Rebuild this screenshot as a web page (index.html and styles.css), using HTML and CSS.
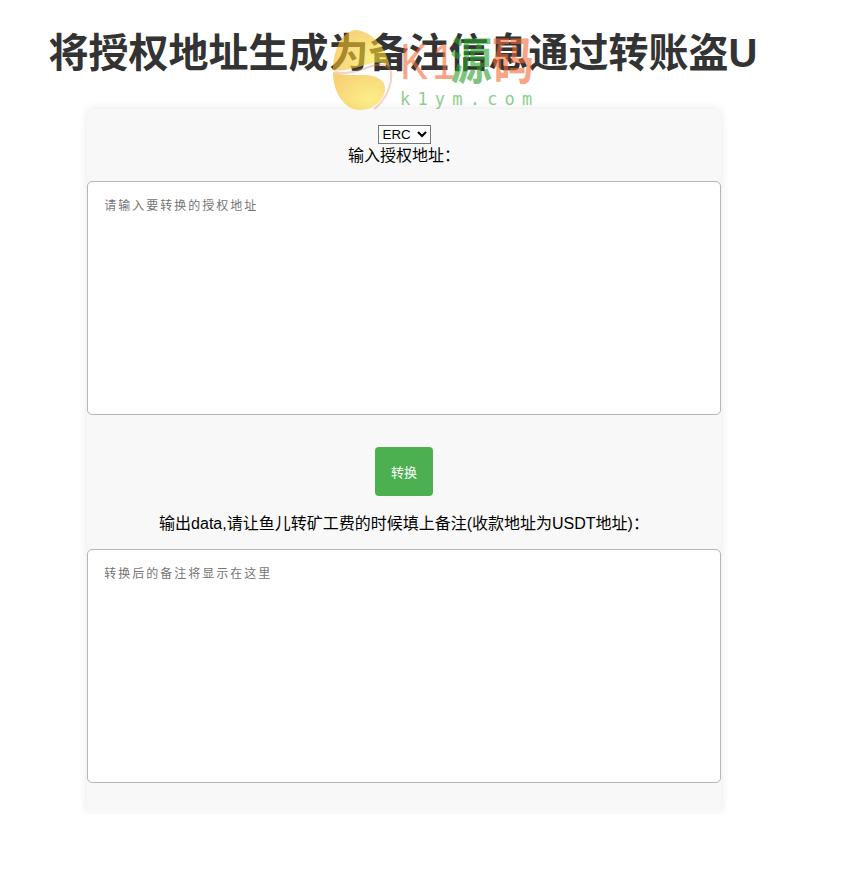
FILE: index.html
```html
<!DOCTYPE html>
<html lang="zh-CN">
<head>
<meta charset="utf-8">
<title>将授权地址生成为备注信息通过转账盗U</title>
<link rel="stylesheet" href="styles.css">
</head>
<body>
<h1 class="title">将授权地址生成为备注信息通过转账盗U</h1>
<main class="panel">
  <select class="chain"><option>ERC</option><option>TRC</option></select>
  <label class="label" for="input">输入授权地址：</label>
  <textarea class="box" id="input" placeholder="请输入要转换的授权地址"></textarea>
  <button class="convert" type="button">转换</button>
  <label class="label" for="output">输出data,请让鱼儿转矿工费的时候填上备注(收款地址为USDT地址)：</label>
  <textarea class="box" id="output" placeholder="转换后的备注将显示在这里"></textarea>
</main>
<div class="watermark" aria-hidden="true">
  <svg class="mark" viewBox="0 0 62 86" width="62" height="86">
    <defs>
      <radialGradient id="sun" cx="70%" cy="72%" r="80%">
        <stop offset="0" stop-color="#fbe43c"/>
        <stop offset="1" stop-color="#f4b41c"/>
      </radialGradient>
    </defs>
    <path d="M23 2C40 3 55 20 58 40C52 34 46 34 41 35C28 38 14 44 1 42C1 22 10 4 23 2Z" fill="url(#sun)"/>
    <path d="M1 44C10 48 22 47 31 47C44 47 54 52 53 62C52 72 42 82 28 82C12 82 1 64 1 44Z" fill="url(#sun)"/>
    <path d="M3 44C14 47 26 43 40 38C50 35 57 38 59 44C61 58 52 74 42 81" fill="none" stroke="#ec7a64" stroke-width="2" opacity="0.6"/>
  </svg>
  <div class="brand">
    <div class="brand-name"><span class="latin red">K1</span><span class="green">源</span><span class="red">码</span></div>
    <div class="brand-url">k1ym.com</div>
  </div>
</div>
</body>
</html>
```
FILE: styles.css
```css
html, body {
  background: #fff;
}
body {
  position: relative;
  width: 792px;
  margin: 8px;
  font-family: "Liberation Sans", "Noto Sans CJK SC", sans-serif;
  font-size: 16px;
  color: #000;
}
.title {
  margin: 18px 2px 29px 0;
  font-size: 40px;
  line-height: 54px;
  font-weight: 700;
  text-align: center;
  color: #333;
}
.panel {
  width: 80%;
  margin: 0 auto;
  padding: 16px 0 31px;
  display: flex;
  flex-direction: column;
  align-items: center;
  background: #f8f8f8;
  border-radius: 8px;
  box-shadow: 0 0 10px rgba(0, 0, 0, 0.1);
}
.chain {
  width: 53px;
  height: 19px;
  margin-bottom: 1px;
  font-family: "Liberation Sans", sans-serif;
  font-size: 13.333px;
  background: #fff;
  border: 1px solid #767676;
  border-radius: 0;
  color: #000;
}
.label {
  line-height: 22px;
  text-align: center;
}
.box {
  display: block;
  box-sizing: border-box;
  width: 100%;
  height: 234px;
  margin-top: 14px;
  padding: 14px 16px;
  background: #fff;
  border: 1px solid #b5b5b5;
  border-radius: 5px;
  font-family: "Liberation Sans", "Noto Sans CJK SC", sans-serif;
  font-size: 12px;
  letter-spacing: 2px;
  resize: none;
}
.box::placeholder {
  color: #757575;
}
.convert {
  width: 58px;
  height: 49px;
  margin: 32px 0 17px;
  padding: 0;
  background: #4caf50;
  color: #fff;
  border: 0;
  border-radius: 4px;
  font-family: "Liberation Sans", "Noto Sans CJK SC", sans-serif;
  font-size: 13px;
}
.watermark {
  position: absolute;
  left: 324px;
  top: 20px;
  display: flex;
  gap: 6px;
  opacity: 0.6;
  pointer-events: none;
}
.mark {
  display: block;
}
.brand {
  display: flex;
  flex-direction: column;
  padding-top: 5px;
}
.brand-name {
  margin-bottom: 5px;
  font-size: 42px;
  line-height: 52px;
  font-weight: 700;
  white-space: nowrap;
  transform: translateY(3px) scaleY(1.2);
}
.latin {
  display: inline-block;
  width: 50px;
  letter-spacing: 4px;
  font-weight: 400;
}
.red {
  color: #f56a36;
}
.green {
  color: #2aa02a;
}
.brand-url {
  color: #3fae3f;
  font-size: 17px;
  line-height: 18px;
  letter-spacing: 7.2px;
  font-family: "DejaVu Sans Mono", monospace;
}
```
